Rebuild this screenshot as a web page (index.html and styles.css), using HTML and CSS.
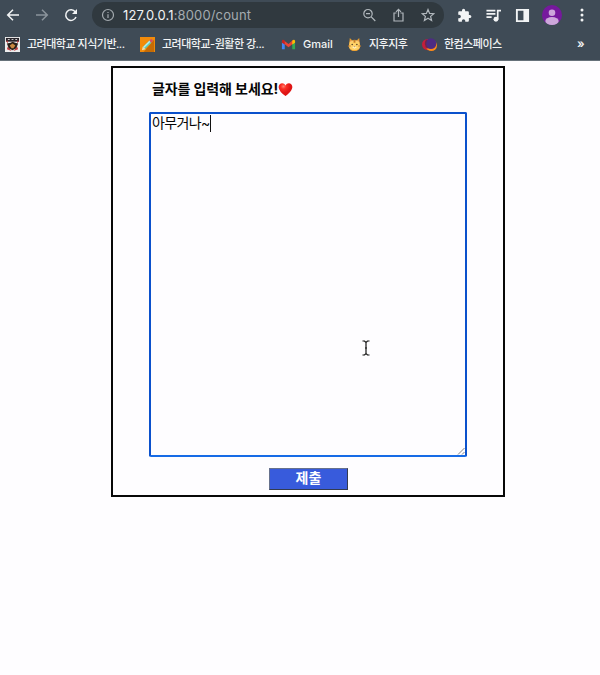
FILE: index.html
```html
<!DOCTYPE html>
<html lang="ko">
<head>
<meta charset="utf-8">
<title>count</title>
<link rel="stylesheet" href="styles.css">
</head>
<body>
<header class="browser">
  <div class="toolbar">
    <nav class="nav">
      <svg class="icon" viewBox="0 0 16 16"><path d="M14 8H3M8 2.700L2.700 8L8 13.300"/></svg>
      <svg class="icon dim" viewBox="0 0 16 16"><path d="M2 8h11M8 2.700L13.300 8L8 13.300"/></svg>
      <svg class="icon" viewBox="0 0 16 16"><path d="M13 10A5.300 5.300 0 1 1 12.300 4.900"/><path class="solid" d="M14 2v5H9z"/></svg>
    </nav>
    <div class="address">
      <svg class="info" viewBox="0 0 14 14"><circle cx="7" cy="7" r="5.500"/><path d="M7 6.300v3.700M7 3.900v1.200"/></svg>
      <span class="url">127.0.0.1<span class="path">:8000/count</span></span>
      <span class="actions">
        <svg class="tool" viewBox="0 0 14 14"><circle cx="5" cy="5.700" r="4.200"/><path d="M8 8.700l4.300 4.300M3 5.700h4"/></svg>
        <svg class="tool" viewBox="0 0 14 14"><path d="M4.500 5H2v8h9V5H8.500M6.500 9V1.500M4 3.800L6.500 1.300 9 3.800"/></svg>
        <svg class="tool" viewBox="0 0 14 14"><path d="M7 1.500l1.600 3.900 4.200.3-3.200 2.700 1 4.100L7 10.300l-3.600 2.200 1-4.100L1.200 5.700l4.200-.3z"/></svg>
      </span>
    </div>
    <div class="extensions">
      <svg class="ext" viewBox="0 0 24 24"><path class="solid" d="M20.500 11H19V7c0-1.100-.9-2-2-2h-4V3.500a2.500 2.500 0 0 0-5 0V5H4c-1.100 0-2 .9-2 2v3.800h1.500a2.700 2.700 0 0 1 0 5.400H2V20c0 1.100.9 2 2 2h3.800v-1.500a2.700 2.700 0 0 1 5.400 0V22H17c1.100 0 2-.9 2-2v-4h1.500a2.500 2.500 0 0 0 0-5z"/></svg>
      <svg class="ext" viewBox="0 0 16 16"><path d="M.5 2.800h9.500M.5 6.300h9.500M.5 9.800h5.500M12.500 12V2.800H16"/><circle class="solid" cx="10.600" cy="12" r="2.600"/></svg>
      <svg class="ext" viewBox="0 0 16 16"><path class="solid" fill-rule="evenodd" d="M1 1h14v14H1zM3 3v10h6V3z"/></svg>
      <svg class="avatar" viewBox="0 0 20 20"><circle cx="10" cy="10" r="10" fill="#76199d"/><circle cx="10" cy="7.700" r="3.300" fill="#cda7db"/><ellipse cx="10" cy="16" rx="6.700" ry="4" fill="#cda7db"/></svg>
      <svg class="more" viewBox="0 0 6 16"><circle cx="3" cy="3" r="1.500"/><circle cx="3" cy="8" r="1.500"/><circle cx="3" cy="13" r="1.500"/></svg>
    </div>
  </div>
  <div class="bookmarks">
    <span class="bookmark"><svg class="fav" viewBox="0 0 16 16"><path fill="#eee" d="M0 0h16v16H0z"/><path fill="#29252b" d="M1 1h14v4H1z"/><path fill="#c43b40" d="M1 4l2 3V4zM15 4l-2 3V4zM2 13l5 2-4-5zM14 13l-5 2 4-5z"/><path fill="#2b2019" d="M2 7l4-1 2-1 3 1 3 1-2 5-4 2-4-2z"/><path fill="#c98942" d="M5 9l3-2 3 2-2 3H7z"/><path fill="#fff" d="M3 2h2v1H3zM7 2h2v1H7zM11 2h2v1h-2z"/></svg><span class="label">고려대학교 지식기반...</span></span>
    <span class="bookmark"><svg class="fav" viewBox="0 0 16 16"><path fill="#f18b0a" d="M0 0h16v16H0z"/><path fill="#c56b05" d="M15 3v13H4z"/><path stroke="#59cdbb" stroke-width="3" d="M4 12l7-7"/><path stroke="#b7edf0" d="M4 11l7-7"/><path stroke="#d15163" stroke-width="3" d="M11 5l2-2"/><path fill="#f5dda6" d="M2 14l1-4 3 3z"/></svg><span class="label">고려대학교-원활한 강...</span></span>
    <span class="bookmark"><svg class="fav" viewBox="0 0 16 16"><path fill="#4285f4" d="M1 4v9h3V6z"/><path fill="#34a853" d="M12 6v7h3V4z"/><path fill="#ea4335" d="M2 3l6 4.500L13 3v4l-5 4-5-4z"/><path fill="#c5221f" d="M1 4q1-2 3 0v4L1 6z"/><path fill="#fbbc04" d="M12 4q2-2 3 0v2l-3 2z"/></svg><span class="label latin">Gmail</span></span>
    <span class="bookmark"><svg class="fav" viewBox="0 0 16 16"><path fill="#e79b2d" d="M3 1l3 3h4l3-3 1 9q-1 5-6 5t-6-5z"/><path fill="#ffd268" d="M3 5q5-3 10 0l1 5q-1 4-6 4t-6-4z"/><path fill="#c77c2b" d="M7 3h2v3H7zM1 9h3v1H1zM12 9h3v1h-3z"/><path fill="#f4a39b" d="M4 3l1 2H4zM12 3l-1 2h1z"/><circle cx="5.500" cy="8" r=".8" fill="#4c3822"/><circle cx="10.500" cy="8" r=".8" fill="#4c3822"/><path fill="#fff0bd" d="M5.500 11L8 9.500l2.500 1.500L8 12.500z"/><path fill="#8d4b29" d="M7 10h2l-1 1z"/></svg><span class="label">지후지후</span></span>
    <span class="bookmark"><svg class="fav" viewBox="0 0 16 16"><circle cx="6" cy="8" r="6" fill="#c51e3b"/><circle cx="10" cy="9" r="6" fill="#ff8a17"/><circle cx="9.500" cy="7" r="5.800" fill="#4d2c83"/><path fill="none" stroke="#742349" d="M5 3q-3 5 1 9"/></svg><span class="label">한컴스페이스</span></span>
    <span class="overflow">»</span>
  </div>
</header>
<main class="panel">
  <h1 class="title"><span class="title-text">글자를 입력해 보세요!</span><svg class="heart" viewBox="0 0 16 16"><defs><radialGradient id="heart-shade" cx="35%" cy="25%"><stop stop-color="#ff8170"/><stop offset=".4" stop-color="#fb2f26"/><stop offset="1" stop-color="#df1515"/></radialGradient></defs><path fill="url(#heart-shade)" d="M8 15Q1 10 .7 5.500C.5 1 6-.3 8 3.600 10-.3 15.500 1 15.300 5.500 15 10 8 15 8 15z"/></svg></h1>
  <div class="editor">
    <span class="typed">아무거나~</span><i class="caret"></i>
    <svg class="resize" viewBox="0 0 8 8"><path d="M1 7.500L7.500 1M5 7.500L7.500 5"/></svg>
    <svg class="cursor" viewBox="0 0 8 16"><path d="M.5 1h2L4 2.500 5.500 1h2M4 2.500v11M.5 15h2L4 13.500 5.500 15h2M3 8h2"/></svg>
  </div>
  <button class="submit">제출</button>
</main>
</body>
</html>
```
FILE: styles.css
```css
* { box-sizing: border-box; }
body {
  margin: 0;
  height: 675px;
  overflow: hidden;
  background: #fefdff;
  color: #050505;
  font-family: Inter, "Noto Sans CJK KR", sans-serif;
}
svg { display: block; flex: none; fill: none; stroke-width: 1.500; }
svg .solid { fill: currentColor; stroke: none; }
.browser { height: 61px; background: #3f4b56; color: #f2f4f5; border-bottom: 1px solid #66717a; }
.toolbar { display: flex; height: 30px; align-items: center; }
.nav { display: flex; width: 92px; padding-left: 5px; gap: 13px; }
.icon { width: 16px; height: 16px; stroke: currentColor; }
.dim { color: #8b949c; }
.address { display: flex; align-items: center; width: 352px; height: 26px; padding: 0 9px; border-radius: 13px; background: #30393f; }
.info { width: 14px; height: 14px; stroke: #a4abb0; stroke-width: 1.200; }
.url { margin-left: 8px; font-size: 13px; line-height: 20px; letter-spacing: .14px; white-space: nowrap; }
.path { color: #a4abb0; }
.actions { display: flex; gap: 15px; margin-left: auto; }
.tool { width: 14px; height: 14px; stroke: #b1b8bd; stroke-width: 1.200; }
.extensions { display: flex; align-items: center; padding-left: 13px; }
.ext { width: 15px; height: 15px; margin-right: 14px; stroke: currentColor; stroke-width: 1.800; }
.avatar { width: 20px; height: 20px; margin-left: -2px; }
.more { width: 6px; height: 16px; margin-left: 17px; fill: currentColor; }
.bookmarks { display: grid; grid-template-columns: 135px 141px 66px 75px 155px auto; align-items: center; height: 28px; padding-left: 5px; }
.bookmark { display: flex; align-items: center; gap: 7px; }
.fav { width: 15px; height: 15px; }
.label { font-size: 11px; font-weight: 500; line-height: 16px; letter-spacing: -.5px; white-space: nowrap; }
.latin { letter-spacing: 0; }
.overflow { font-size: 12px; line-height: 14px; font-weight: 600; }
.panel { width: 394px; height: 431px; margin: 5px 0 0 111px; border: 2px solid #080808; }
.title { display: flex; align-items: center; height: 20px; margin: 11px 0 0 39px; font-size: 14px; line-height: 20px; font-weight: 700; letter-spacing: -.1px; }
.title-text { white-space: nowrap; }
.heart { width: 15px; height: 15px; }
.editor { display: flex; position: relative; width: 318px; height: 345px; margin: 13px 0 0 36px; padding: 0 1px; border: 2px solid #0b51cc; border-bottom-color: #166be6; border-radius: 2px; }
.typed { height: 18px; font-size: 14px; line-height: 18px; letter-spacing: -.65px; white-space: nowrap; }
.caret { width: 1px; height: 17px; margin-top: 1px; background: #111; }
.resize { position: absolute; right: 0; bottom: 0; width: 8px; height: 8px; stroke: #666; stroke-width: .8; }
.cursor { position: absolute; left: 211px; top: 226px; width: 8px; height: 16px; stroke: #151515; stroke-width: 1.200; }
.submit { display: block; width: 79px; height: 22px; margin: 11px 0 0 156px; padding: 0 0 2px; border: 1px solid #333b50; border-top-color: #66718e; border-left-color: #66718e; background: #385bdc; color: #fff; font: 700 14px/18px Inter, "Noto Sans CJK KR", sans-serif; }
```
